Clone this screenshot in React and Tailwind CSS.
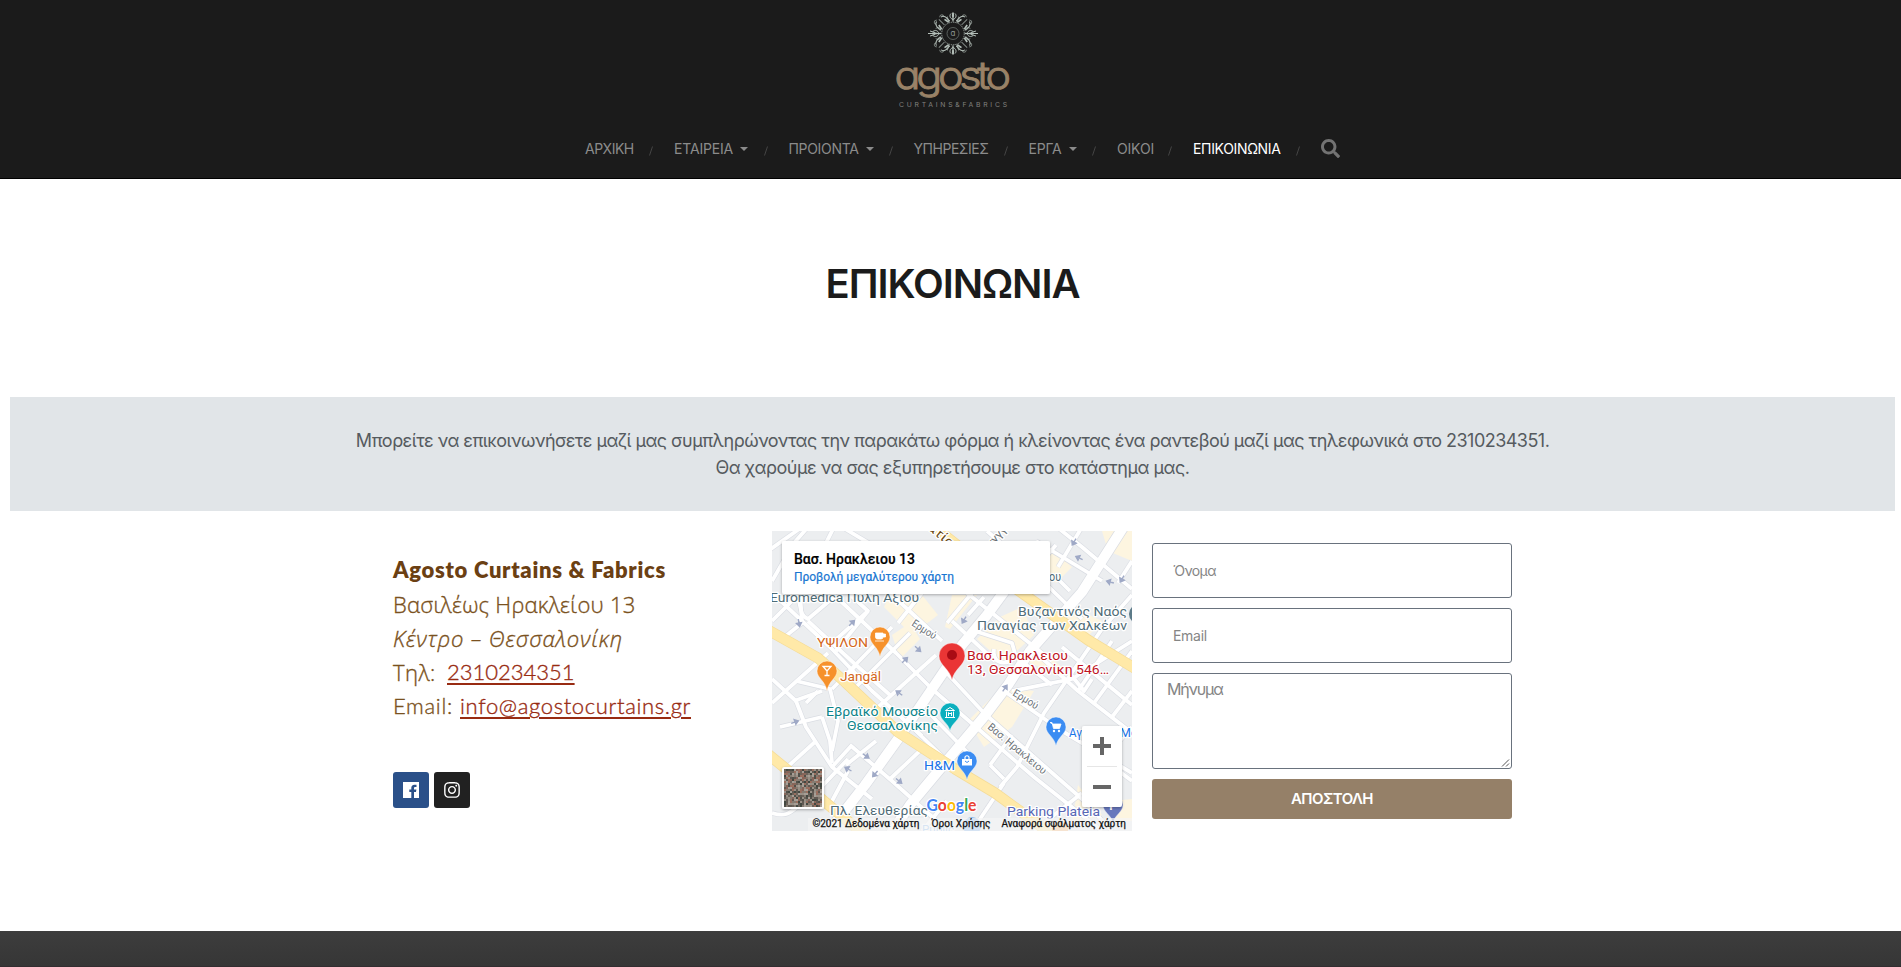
import React from "react";
import { FaSearch, FaInstagram } from "react-icons/fa";

const NAV = [
  { label: "ΑΡΧΙΚΗ", box: "w-[89px]", ls: "tracking-[-0.5px]" },
  { label: "ΕΤΑΙΡΕΙΑ", box: "w-[114.5px]", ls: "tracking-[-0.18px]", caret: true },
  { label: "ΠΡΟΙΟΝΤΑ", box: "w-[125px]", ls: "tracking-[-0.32px]", caret: true },
  { label: "ΥΠΗΡΕΣΙΕΣ", box: "w-[115px]", ls: "tracking-[-0.46px]" },
  { label: "ΕΡΓΑ", box: "w-[88.5px]", ls: "tracking-[-0.23px]", caret: true },
  { label: "ΟΙΚΟΙ", box: "w-[76px]", ls: "tracking-[-0.17px]" },
  { label: "ΕΠΙΚΟΙΝΩΝΙΑ", box: "w-[128px]", ls: "tracking-[-0.34px]", active: true },
];

function Logo() {
  return (
    <svg width="130" height="110" viewBox="888 0 130 110" className="block">
      <g transform="translate(953 33.5)" fill="none" stroke="#b4bfb9" strokeWidth="1">
        {[0, 90, 180, 270].map((a) => (
          <g key={a} transform={`rotate(${a})`}>
            <path d="M0 -12V-21" strokeWidth="1.3" />
            <path d="M0 -14C-3 -15 -4 -18 -2 -20M0 -14C3 -15 4 -18 2 -20" />
            <ellipse cy="-18.5" rx="1.1" ry="2.6" fill="#b4bfb9" stroke="none" />
            <path d="M-3 -13C-6 -12 -7 -16 -5 -17M3 -13C6 -12 7 -16 5 -17" strokeOpacity=".8" />
          </g>
        ))}
        {[45, 135, 225, 315].map((a) => (
          <g key={a} transform={`rotate(${a})`}>
            <path d="M0 -12V-20" strokeOpacity=".7" />
            <path d="M-6 -11C-8 -15 -6 -20 -3 -20M6 -11C8 -15 6 -20 3 -20" />
            <path d="M-5 -11L-4 -16M5 -11L4 -16" strokeWidth="1.7" />
            <path d="M-2 -21C-5 -23 -7 -20 -5 -18.500M2 -21C5 -23 7 -20 5 -18.500" strokeOpacity=".6" />
          </g>
        ))}
        <path d="M-19 0H-25M19 0H25M-18 -1L-23 -2.500M-18 1L-23 2.500M18 -1L23 -2.500M18 1L23 2.500" />
        <circle r="11.300" strokeWidth="1" strokeOpacity=".75" strokeDasharray="1.500 .8" />
        <circle r="6" stroke="#68706c" strokeWidth=".8" />
      </g>
      <text x="953" y="36" textAnchor="middle" fontSize="8" fill="#8b938f" className="font-['Inter',sans-serif] [font-feature-settings:'cv11']">a</text>
      <text transform="translate(894.5 88.5) scale(1.12 1)" fontSize="38.500" textLength="104" fill="#998267" className="font-['Inter',sans-serif] font-light [font-feature-settings:'cv11']" stroke="#998267" strokeWidth=".9">agosto</text>
      <text x="899" y="107" fontSize="6.800" textLength="108" fill="#82827f" className="font-['Inter',sans-serif]">CURTAINS&amp;FABRICS</text>
    </svg>
  );
}

const MINOR = [
  "M0 50L22 12L36 -4", "M-4 20L30 -4", "M62 -4L50 20", "M0 62L60 118L100 160L150 205", "M0 90L28 62",
  "M24 62C30 72 26 84 36 88L62 66", "M28 62L30 92L10 108", "M36 90L84 134L118 164", "M60 62L124 122L160 158L262 246L330 300",
  "M76 62L96 80L60 112", "M96 80L64 120", "M84 134L70 150", "M118 62L170 110", "M150 62L126 92", "M60 158L120 96",
  "M80 160L138 102", "M104 178L164 124", "M0 172L56 122", "M24 150L58 158L66 190L60 220", "M0 148L24 170L34 196L60 236L100 268",
  "M22 170L50 160", "M8 196L50 186", "M50 186L58 210L60 232", "M13 238L44 210", "M34 172L46 160", "M74 234L104 210",
  "M78 214L120 250L165 290", "M60 236L80 214", "M118 248L152 216", "M60 270L76 240", "M0 282C20 288 20 276 36 270L76 228",
  "M140 272L183 220", "M150 300L175 270", "M232 160L290 200L360 242", "M173 140L212 182L262 226", "M155 180L198 224",
  "M173 228L140 196", "M262 226L310 268L340 300", "M218 234L240 204M218 234L232 248", "M228 256L245 236L272 182L330 98L360 64",
  "M200 300L232 252", "M262 300L310 262", "M285 -4L310 16L360 58", "M264 10L330 50", "M270 30L284 14", "M298 60L284 46",
  "M346 52L360 30", "M310 -4L286 36", "M203 100L240 112L244 126L280 154", "M222 118C220 132 232 136 244 126",
  "M195 62L280 130", "M180 90L223 130", "M200 62L175 92", "M196 84L212 66", "M260 118L306 160L360 202", "M290 116L360 174",
  "M306 160L340 110", "M322 172L360 120", "M240 160L300 148L360 110", "M340 186L360 160", "M170 8L230 62",
  "M215 0L250 30L310 88", "M330 230L360 196", "M70 -4L110 20", "M296 140L312 160L320 148", "M336 232L360 250",
];

const MAJOR = [
  "M354 -8L310 61L258 120L236 154L211 187L173 232L138 274L118 304",
  "M240 50L215 84L190 114L126 208L93 254L60 296",
];

const BLOCKS = [
  "M118 64L150 64L166 84L140 104L112 76Z", "M120 104L138 92L148 108L128 128Z", "M180 64L205 64L178 98L173 96Z",
  "M228 86L250 76L262 104L232 132L205 108Z", "M230 156L262 160L240 196L212 216L196 190Z", "M330 0L360 0L360 30L336 20Z",
  "M270 10L300 36L284 52L260 32Z", "M276 140L250 128L262 112L292 138Z", "M300 76L330 90L310 112L290 96Z", "M306 254L330 284L300 292Z",
  "M340 270L360 268L360 290L344 290Z",
];

const ARROWS = [[80, 92, -45], [27, 92, 80], [146, 118, 42], [133, 129, -45], [302, 11, 120], [307, 27, 205], [338, 51, 195], [350, 48, 120], [192, 89, 120],
  [127, 162, 215], [23, 191, -20], [94, 225, 35], [76, 238, 210], [103, 243, 130], [127, 250, 40], [233, 157, -55]];

function Pin({ x, y, r = 10, tip, color, children }) {
  return (
    <g transform={`translate(${x} ${y})`}>
      <path d={`M${-r} 0A${r} ${r} 0 1 1 ${r} 0C${r} ${r * 0.7} ${r * 0.15} ${r} 0 ${tip}C${-r * 0.15} ${r} ${-r} ${r * 0.7} ${-r} 0Z`} fill={color} stroke="#fff" strokeOpacity=".7" strokeWidth=".6" />
      {children}
    </g>
  );
}

function Label({ x, y, w, size = 13.5, color = "#4f6c77", children }) {
  return (
    <text x={x} y={y} textLength={w} lengthAdjust="spacingAndGlyphs" fontSize={size} fill={color} stroke="#fff" strokeWidth="2.5" strokeLinejoin="round" paintOrder="stroke">
      {children}
    </text>
  );
}

const TILE_COLORS = ["#6b6259", "#8a7f75", "#4a4a44", "#a39a90", "#8d6458", "#5c5650", "#a4715f", "#37403a", "#b3aba3"];

function MapView() {
  return (
    <svg width="360" height="300" viewBox="0 0 360 300" className="block overflow-hidden font-['Roboto',sans-serif]">
      <defs>
        <filter id="sh" x="-20%" y="-20%" width="140%" height="150%"><feDropShadow dx="0" dy="1" stdDeviation="1.5" floodOpacity=".3" /></filter>
      </defs>
      <rect width="360" height="300" fill="#eceef0" />
      {BLOCKS.map((d) => <path key={d} d={d} fill="#fdf5e0" />)}
      <g fill="none" strokeLinejoin="round">
        <g stroke="#dadde3">
          {MINOR.map((d) => <path key={d} d={d} strokeWidth="5" />)}
          {MAJOR.map((d) => <path key={d} d={d} strokeWidth="11.500" />)}
        </g>
        <g stroke="#fff">
          {MINOR.map((d) => <path key={d} d={d} strokeWidth="3.800" />)}
          {MAJOR.map((d) => <path key={d} d={d} strokeWidth="10" />)}
        </g>
        <g stroke="#f5dc98" strokeWidth="11">
          <path d="M-4 99L46 127L73 151L126 201L183 238L223 262L263 291L280 304" />
          <path d="M162 -4L190 18L250 62L316 109L364 138" />
          <path d="M-4 223L13 237L53 271L95 306" />
        </g>
        <g stroke="#ffe9a8" strokeWidth="9.500">
          <path d="M-4 99L46 127L73 151L126 201L183 238L223 262L263 291L280 304" />
          <path d="M162 -4L190 18L250 62L316 109L364 138" />
          <path d="M-4 223L13 237L53 271L95 306" />
        </g>
      </g>
      {ARROWS.map(([x, y, a]) => (
        <path key={`${x}-${y}`} transform={`translate(${x} ${y}) rotate(${a})`} d="M-4 0H2M0 -2.500L3.500 0L0 2.500Z" stroke="#9fa9c6" strokeWidth="1.400" fill="#9fa9c6" />
      ))}

      <g transform="translate(158 0) rotate(40)"><Label x={-4} y={0} w={30} size={13} color="#6b4a14">ατία</Label></g>
      <g transform="translate(222 14) rotate(-48)"><Label x={-4} y={0} w={24} size={11} color="#6d7377">γγγγ</Label></g>
      <g transform="translate(139 94) rotate(33)"><Label x={0} y={0} w={27} size={10.500} color="#6d7377">Ερμού</Label></g>
      <g transform="translate(240 164) rotate(31)"><Label x={0} y={0} w={28} size={10.500} color="#6d7377">Ερμού</Label></g>
      <g transform="translate(215 197) rotate(40)"><Label x={0} y={0} w={73} size={10.500} color="#6d7377">Βασ. Ηρακλειου</Label></g>

      <Label x={-2} y={71} w={149}>Euromedica Πύλη Αξίου</Label>
      <Label x={277} y={50} w={12}>ου</Label>
      <Label x={246} y={85} w={109}>Βυζαντινός Ναός</Label>
      <Label x={205} y={99} w={150}>Παναγίας των Χαλκέων</Label>
      <circle cx="367" cy="83" r="10" fill="#5c7a88" />
      <Label x={45} y={116} w={51} color="#d3661a">ΥΨΙΛΟΝ</Label>
      <Label x={68} y={150} w={41} color="#d3661a">Jangäl</Label>
      <Label x={54} y={185} w={112} color="#0b8389">Εβραϊκό Μουσείο</Label>
      <Label x={75} y={199} w={91} color="#0b8389">Θεσσαλονίκης</Label>
      <Label x={152} y={239} w={31} color="#1a73e8">H&amp;M</Label>
      <Label x={297} y={206} w={13} color="#1a73e8">Αγ</Label>
      <Label x={348} y={206} w={18} color="#1a73e8">Μο</Label>
      <Label x={58} y={283.500} w={98}>Πλ. Ελευθερίας</Label>
      <Label x={235} y={285} w={93} color="#5767b5">Parking Plateia</Label>
      <Label x={150} y={303} w={32} color="#8fbdf0">Public</Label>
      <Label x={195} y={129} w={101} color="#c0151f">Βασ. Ηρακλειου</Label>
      <Label x={195} y={142.500} w={142} color="#c0151f">13, Θεσσαλονίκη 546…</Label>

      <Pin x={108} y={106} tip={20} color="#f6912b">
        <path d="M-4.500 -4H3V0Q3 2 1 2H-2.500Q-4.500 2 -4.500 0ZM3 -3H5.500V0H3M-5 4H4" fill="#fff" stroke="#fff" strokeWidth=".8" />
      </Pin>
      <Pin x={55} y={140} tip={20} color="#f6912b">
        <path d="M-4 -4.500H4L0 0ZM0 0V4M-2.500 4.500H2.500" fill="none" stroke="#fff" strokeWidth="1.300" />
      </Pin>
      <Pin x={178} y={182} tip={18} color="#0bafbe">
        <path d="M-4.500 -2.500L0 -5.500L4.500 -2.500ZM-3.500 -1.500V4M3.500 -1.500V4M-5 4.500H5M-1.500 3V-.5L0 1L1.500 -.5V3" fill="none" stroke="#fff" strokeWidth="1" />
      </Pin>
      <Pin x={195} y={230} tip={19} color="#3b8cf2">
        <path d="M-5 -2H5V4.500H-5Z" fill="#fff" /><path d="M-2 -2V-4Q0 -6.500 2 -4V-2" fill="none" stroke="#fff" strokeWidth="1.200" />
        <path d="M-2 0Q0 3 2 0" fill="none" stroke="#3b8cf2" />
      </Pin>
      <Pin x={284} y={196} tip={19} color="#3b8cf2">
        <path d="M-6 -4.500H-4L-2.500 1.500H3.500L5 -3H-3.500Z" fill="#fff" stroke="#fff" strokeWidth=".8" /><circle cx="-2" cy="4" r="1.200" fill="#fff" /><circle cx="3" cy="4" r="1.200" fill="#fff" />
      </Pin>
      <Pin x={341} y={274} tip={18} color="#6878bd">
        <text x="0" y="5" fontSize="12" textAnchor="middle" fill="#fff" className="font-bold">P</text>
      </Pin>
      <Pin x={180} y={125} r={13} tip={24} color="#ea3535"><circle r="5" cy="-1" fill="#a90b14" /></Pin>

      <text x="154.500" y="280" fontSize="17" textLength="50" lengthAdjust="spacingAndGlyphs" stroke="#fff" strokeWidth="2.500" paintOrder="stroke" className="font-['Lato',sans-serif] font-bold">
        <tspan fill="#4285f4">G</tspan><tspan fill="#ea4335">o</tspan><tspan fill="#fbbc04">o</tspan><tspan fill="#4285f4">g</tspan><tspan fill="#34a853">l</tspan><tspan fill="#ea4335">e</tspan>
      </text>

      <circle cx="200" cy="295" r="9" fill="#8ab8ee" />
      <circle cx="288" cy="299" r="8" fill="#f8b878" />
      <rect x="36" y="287" width="324" height="13" fill="#f5f5f5" fillOpacity=".7" />
      <g fontSize="10" fill="#111" stroke="#111" strokeWidth=".25">
        <text x="40.500" y="296" textLength="107">©2021 Δεδομένα χάρτη</text>
        <text x="159.500" y="296" textLength="59">Όροι Χρήσης</text>
        <text x="229.500" y="296" textLength="124.500">Αναφορά σφάλματος χάρτη</text>
      </g>

      <g filter="url(#sh)"><rect x="10" y="10" width="268" height="53" rx="2" fill="#fff" /></g>
      <text x="22" y="32.500" fontSize="14" textLength="121" fill="#000" stroke="#000" strokeWidth=".2" className="font-medium">Βασ. Ηρακλειου 13</text>
      <text x="22" y="50" fontSize="12" textLength="160" fill="#1976d2" stroke="#1976d2" strokeWidth=".2">Προβολή μεγαλύτερου χάρτη</text>

      <g filter="url(#sh)"><rect x="310" y="195" width="40" height="81" rx="2" fill="#fff" /></g>
      <path d="M315 235.500H345" stroke="#e6e6e6" />
      <path d="M321 215H339M330 206V224M321 256H339" stroke="#666" strokeWidth="4" />

      <g filter="url(#sh)"><rect x="10" y="236" width="42" height="42" rx="2.500" fill="#fff" /></g>
      <rect x="12" y="238" width="38" height="38" fill="#75695f" />
      <g transform="translate(12 238)">
        {Array.from({ length: 361 }, (_, i) => (
          <path key={i} d={`M${(i % 19) * 2} ${Math.floor(i / 19) * 2}h2v2h-2z`} fill={TILE_COLORS[(i * i * 7 + i * 13 + Math.floor(i / 19) * 5 + ((i * 31) % 17)) % 9]} opacity=".8" />
        ))}
      </g>
    </svg>
  );
}

export default function App() {
  return (
    <div className="flex h-[967px] w-full flex-col overflow-hidden bg-white font-['Inter','Open_Sans',sans-serif]">
      <header className="flex h-[179px] shrink-0 flex-col items-center border-b border-black bg-[#1b1b1b]">
        <div className="pl-[5px]"><Logo /></div>
        <nav className="flex h-[78px] w-full items-start pt-[29px] pl-[585px] text-[14px] leading-5 text-[#8b8b8b]">
          {NAV.map((n) => (
            <div key={n.label} className={`flex h-5 shrink-0 items-center ${n.box}`}>
              <span className={`whitespace-nowrap ${n.ls} ${n.active ? "text-white" : ""}`}>{n.label}</span>
              {n.caret && <span className="ml-[7px] h-0 w-0 border-x-4 border-t-4 border-x-transparent border-t-[#8b8b8b]" />}
              <svg width="4" height="10" className="mt-[4px] mr-[21px] ml-auto"><path d="M.5 9.500L3.500 .5" stroke="#444" strokeWidth="1" /></svg>
            </div>
          ))}
          <FaSearch className="size-[19px] text-[#737373]" />
        </nav>
      </header>

      <main className="flex flex-1 flex-col">
        <h1 className="pt-20 pl-1 text-center text-[40px] leading-[50px] font-semibold tracking-[-1.050px] text-[#1b1b1b]">ΕΠΙΚΟΙΝΩΝΙΑ</h1>
        <section className="mt-[88px] mr-[6px] ml-[10px] flex h-[114px] flex-col items-center justify-center bg-[#e1e5e8] text-[18px] leading-[27px] text-[#565b5f]">
          <p className="tracking-[-0.530px] whitespace-nowrap">Μπορείτε να επικοινωνήσετε μαζί μας συμπληρώνοντας την παρακάτω φόρμα ή κλείνοντας ένα ραντεβού μαζί μας τηλεφωνικά στο 2310234351.</p>
          <p className="tracking-[-0.488px] whitespace-nowrap">Θα χαρούμε να σας εξυπηρετήσουμε στο κατάστημα μας.</p>
        </section>

        <section className="mt-5 flex pl-[393px]">
          <div className="w-[379px] pt-[22px] font-['Lato','Open_Sans',sans-serif] text-[22px] leading-[34px] text-[#7a5120]">
            <p className="font-extrabold tracking-[0.700px] text-[#6b4013]">Agosto Curtains &amp; Fabrics</p>
            <p className="font-['Open_Sans'] font-light tracking-[0.280px] [-webkit-text-stroke:0.35px_#7a5120]">Βασιλέως Ηρακλείου 13</p>
            <p className="font-['Open_Sans'] font-light tracking-[0.850px] italic [-webkit-text-stroke:0.35px_#7a5120]">Κέντρο – Θεσσαλονίκη</p>
            <p className="flex"><span className="w-[54px] font-['Open_Sans'] font-light tracking-[0.500px] [-webkit-text-stroke:0.35px_#7a5120]">Τηλ:</span><a className="font-light text-[#982b12] underline decoration-2 underline-offset-[3px] [-webkit-text-stroke:0.35px_#982b12]">2310234351</a></p>
            <p className="flex font-light"><span className="w-[67px] tracking-[0.700px] [-webkit-text-stroke:0.35px_#7a5120]">Email:</span><a className="tracking-[0.660px] text-[#982b12] underline decoration-2 underline-offset-[3px] [-webkit-text-stroke:0.35px_#982b12]">info@agostocurtains.gr</a></p>
            <div className="mt-[49px] flex gap-[5px]">
              <div className="flex size-9 items-center justify-center rounded-[3px] bg-[#2a5089]">
                <svg width="16" height="16" viewBox="0 0 16 16"><path fill="#fff" d="M0 0H16V16H11V10H13L13.400 7.500H11V6.200C11 5.300 11.500 5 12.200 5H13.500V2.700H11.500C9.300 2.700 8.300 4 8.300 5.900V7.500H6.300V10H8.300V16H0Z" /></svg>
              </div>
              <div className="flex size-9 items-center justify-center rounded-[3px] bg-[#212121]"><FaInstagram className="size-[18px] text-white" /></div>
            </div>
          </div>
          <MapView />
          <div className="ml-5 flex w-[360px] flex-col pt-3 text-[14px] text-[#858585]">
            <div className="flex h-[55px] items-center rounded-[3px] border border-[#69727d] pl-[20px] tracking-[-0.600px]">Όνομα</div>
            <div className="mt-[10px] flex h-[55px] items-center rounded-[3px] border border-[#69727d] pl-[20px] tracking-[-0.300px]">Email</div>
            <div className="mt-[10px] flex h-24 justify-between rounded-[3px] border border-[#69727d] pt-[3px] pl-[14px] text-[16px] leading-6 tracking-[-1.200px]">
              <span>Μήνυμα</span>
              <svg width="9" height="9" className="mr-px mb-px self-end"><path d="M1 8.500L8 1.500M5 8.500L8 5.500" stroke="#555" strokeWidth="1" /></svg>
            </div>
            <div className="mt-[10px] flex h-10 items-center justify-center rounded-[3px] bg-[#958068] pt-px text-[15px] font-semibold tracking-[-0.560px] text-white">ΑΠΟΣΤΟΛΗ</div>
          </div>
        </section>
      </main>
      <footer className="h-9 shrink-0 border-b border-[#332d30] bg-linear-to-b from-[#3d3d3d] to-[#363636]" />
    </div>
  );
}
